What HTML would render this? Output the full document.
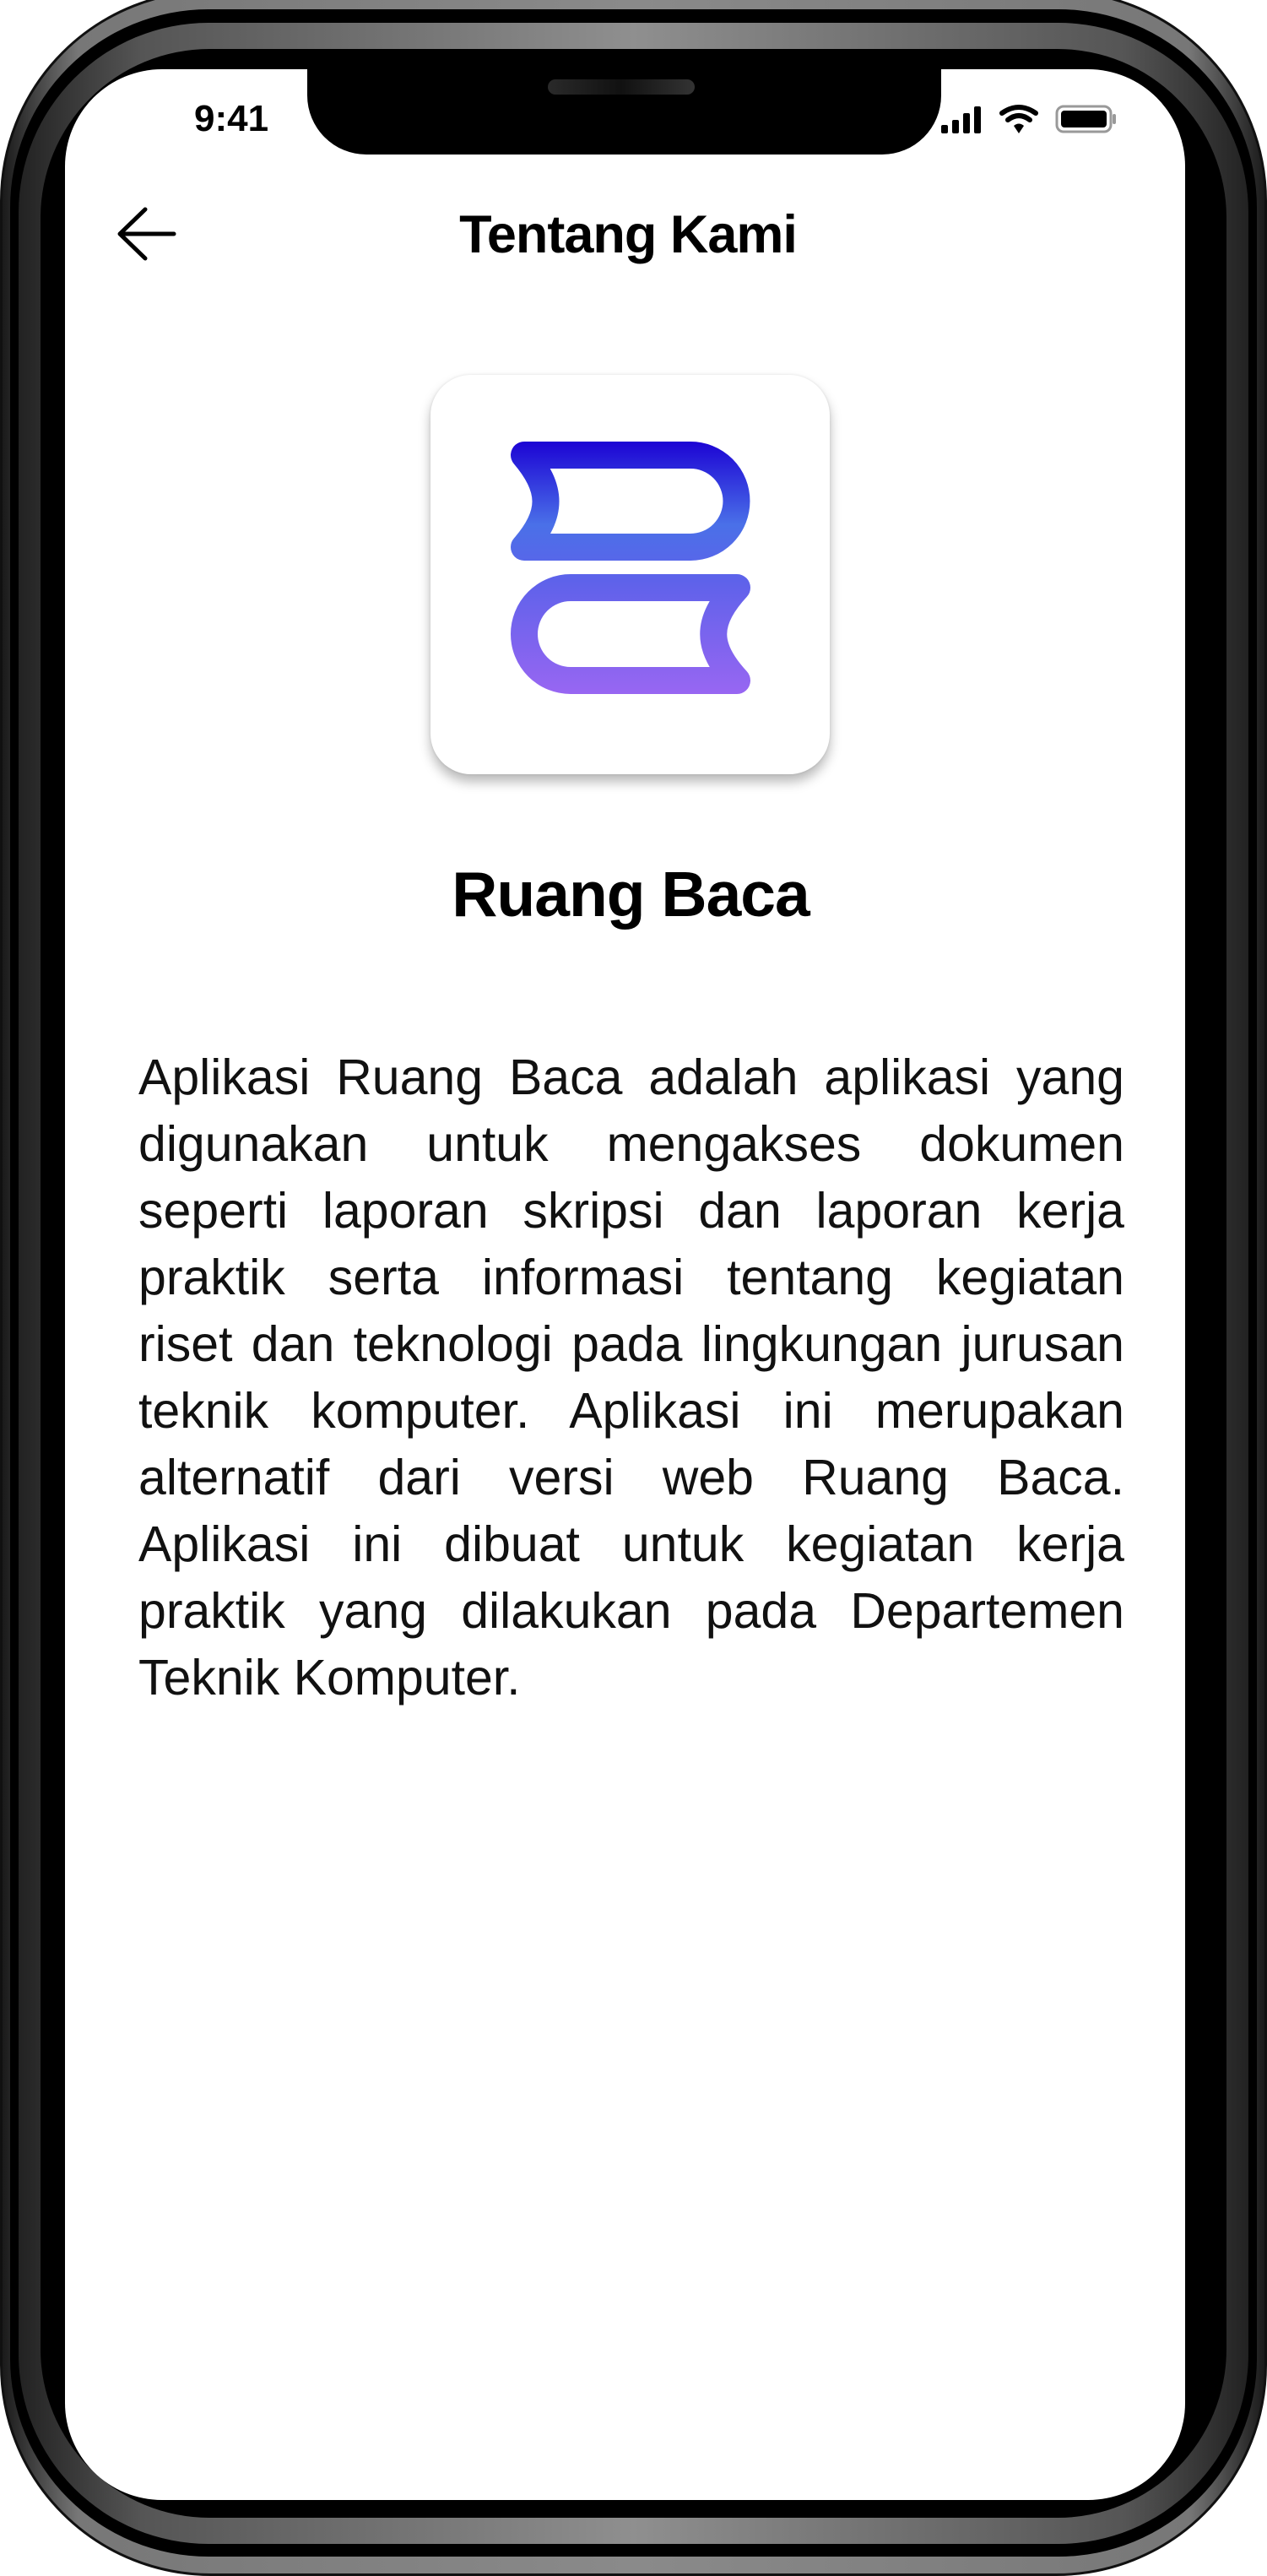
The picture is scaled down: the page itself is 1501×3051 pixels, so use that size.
<!DOCTYPE html>
<html><head><meta charset="utf-8"><style>
*{margin:0;padding:0;box-sizing:border-box}
body{width:1501px;height:3039px;overflow:hidden;background:#fff;position:relative;font-family:"Liberation Sans",sans-serif}
.abs{position:absolute}
#l1{left:0;top:-12px;width:1501px;height:3063px;border-radius:250px;background:linear-gradient(90deg,#1a1a1a 0%,#777 6%,#8a8a8a 50%,#777 94%,#1a1a1a 100%);border:3px solid #111}
#l2{left:12px;top:11px;width:1477px;height:3017px;border-radius:235px;background:#000}
#l3{left:22px;top:27px;width:1457px;height:2986px;border-radius:225px;background:linear-gradient(90deg,#222 0%,#555 10%,#8f8f8f 50%,#555 90%,#222 100%)}
#l4{left:48px;top:58px;width:1405px;height:2924px;border-radius:200px;background:#000}
#scr{left:77px;top:82px;width:1327px;height:2879px;border-radius:115px;background:#fff}
#notch{left:364px;top:80px;width:751px;height:103px;background:#000;border-radius:0 0 70px 70px}
#spk{left:649px;top:94px;width:174px;height:18px;border-radius:9px;background:linear-gradient(90deg,#2a2a2a,#111 50%,#333)}
.p{position:absolute;left:164px;width:1168px;font-size:59px;color:#111;line-height:79px;height:79px;text-align:justify;text-align-last:justify;white-space:nowrap}
</style></head><body>
<div id="l1" class="abs"></div>
<div id="l2" class="abs"></div>
<div id="l3" class="abs"></div>
<div id="l4" class="abs"></div>
<div id="scr" class="abs"></div>
<div id="notch" class="abs"></div>
<div id="spk" class="abs"></div>
<div class="abs" style="left:230px;top:116px;font-size:44px;font-weight:bold;color:#000">9:41</div>
<svg class="abs" style="left:1112px;top:122px" width="215" height="40" viewBox="0 0 215 40">
<rect x="3" y="26" width="8" height="10" rx="2"/><rect x="16" y="20" width="8" height="16" rx="2"/><rect x="29" y="12" width="8" height="24" rx="2"/><rect x="42" y="4" width="8" height="32" rx="2"/>
<path d="M75 12 Q95 -2 115 12" stroke="#000" stroke-width="6" fill="none" stroke-linecap="round"/>
<path d="M82 20 Q95 10 108 20" stroke="#000" stroke-width="6" fill="none" stroke-linecap="round"/>
<path d="M89 27 Q95 22 101 27 L95 36 Z" fill="#000"/>
<rect x="140" y="4" width="64" height="30" rx="8" fill="none" stroke="#999" stroke-width="3"/>
<rect x="145" y="9" width="54" height="20" rx="4" fill="#000"/>
<rect x="206" y="13" width="4" height="12" rx="2" fill="#999"/>
</svg>
<svg class="abs" style="left:132px;top:240px" width="80" height="75" viewBox="0 0 80 75">
<path d="M74 37 H12 M40 8 L10 37 L40 66" stroke="#000" stroke-width="5" fill="none" stroke-linecap="round" stroke-linejoin="round"/>
</svg>
<div class="abs" style="left:344px;width:800px;top:242px;text-align:center;font-size:63px;font-weight:bold;color:#000;letter-spacing:-1px">Tentang Kami</div>
<div class="abs" style="left:510px;top:444px;width:473px;height:473px;border-radius:48px;background:#fff;box-shadow:0 9px 14px rgba(0,0,0,0.28),0 0 3px rgba(0,0,0,0.1)">
<svg width="473" height="473" viewBox="0 0 473 473">
<defs><linearGradient id="g" gradientUnits="userSpaceOnUse" x1="0" y1="79" x2="0" y2="378">
<stop offset="0" stop-color="#1c04d4"/><stop offset="0.33" stop-color="#4a70e8"/><stop offset="0.55" stop-color="#5e62ea"/><stop offset="1" stop-color="#9866f2"/></linearGradient></defs>
<path d="M111 95 H308 A54.5 54.5 0 0 1 308 204 H111 C145 165 145 135 111 95 Z" fill="none" stroke="url(#g)" stroke-width="32" stroke-linejoin="round"/>
<path d="M166 252 H363 C326 292 326 322 363 362 H166 A55 55 0 0 1 166 252 Z" fill="none" stroke="url(#g)" stroke-width="32" stroke-linejoin="round"/>
</svg></div>
<div class="abs" style="left:347px;width:800px;top:1016px;text-align:center;font-size:75px;font-weight:bold;color:#000;letter-spacing:-1px">Ruang Baca</div>
<div class="p" style="top:1237px">Aplikasi Ruang Baca adalah aplikasi yang</div>
<div class="p" style="top:1316px">digunakan untuk mengakses dokumen</div>
<div class="p" style="top:1395px">seperti laporan skripsi dan laporan kerja</div>
<div class="p" style="top:1474px">praktik serta informasi tentang kegiatan</div>
<div class="p" style="top:1553px">riset dan teknologi pada lingkungan jurusan</div>
<div class="p" style="top:1632px">teknik komputer. Aplikasi ini merupakan</div>
<div class="p" style="top:1711px">alternatif dari versi web Ruang Baca.</div>
<div class="p" style="top:1790px">Aplikasi ini dibuat untuk kegiatan kerja</div>
<div class="p" style="top:1869px">praktik yang dilakukan pada Departemen</div>
<div class="p" style="top:1948px;text-align:left;text-align-last:left">Teknik Komputer.</div>
</body></html>
